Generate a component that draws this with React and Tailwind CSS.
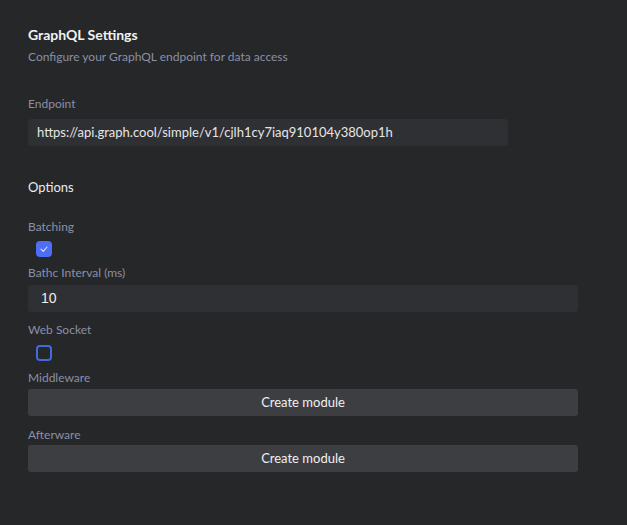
export default function App() {
  const label = "block text-[12px] leading-[18px] text-[#8a90a6]";
  return (
    <div className="w-[627px] h-[525px] bg-[#262729] font-['Lato','Noto_Sans',sans-serif] overflow-hidden">
      <div className="pl-[28px] pt-[25px] flex flex-col">
        <h1 className="text-[14px] leading-[20px] font-bold text-[#f2f2f2]">GraphQL Settings</h1>
        <p className="mt-[3px] text-[12px] leading-[18px] text-[#8a90a6]">Configure your GraphQL endpoint for data access</p>

        <span className={label + " mt-[29px]"}>Endpoint</span>
        <div className="mt-[6px] w-[480px] h-[27px] rounded-[3px] bg-[#2f3034] flex items-center pl-[9px] text-[13px] text-[#e6e6e6]">
          https://api.graph.cool/simple/v1/cjlh1cy7iaq910104y380op1h
        </div>

        <h2 className="mt-[31px] text-[13px] leading-[20px] text-[#ebebeb]">Options</h2>

        <span className={label + " mt-[21px]"}>Batching</span>
        <div className="mt-[5px] ml-[8px] w-[16px] h-[16px] rounded-[4px] bg-[#4d6ef5] flex items-center justify-center">
          <svg width="10" height="10" viewBox="0 0 10 10" fill="none">
            <path d="M2 5.2 L4.2 7.3 L8 3" stroke="#dfe6ff" strokeWidth="1.1" strokeLinecap="round" strokeLinejoin="round" />
          </svg>
        </div>

        <span className={label + " mt-[7px]"}>Bathc Interval (ms)</span>
        <div className="mt-[3px] w-[550px] h-[27px] rounded-[3px] bg-[#2f3034] flex items-center pl-[13px] text-[14px] text-[#ededed] font-['Liberation_Sans',sans-serif]">
          10
        </div>

        <span className={label + " mt-[9px]"}>Web Socket</span>
        <div className="mt-[6px] ml-[8px] w-[16px] h-[16px] rounded-[4px] border-2 border-[#3f6ae0]"></div>

        <span className={label + " mt-[8px]"}>Middleware</span>
        <button className="mt-[2px] w-[550px] h-[27px] rounded-[3px] bg-[#3d3e42] text-[13px] text-[#f0f0f0]">
          Create module
        </button>

        <span className={label + " mt-[10px]"}>Afterware</span>
        <button className="mt-[1px] w-[550px] h-[27px] rounded-[3px] bg-[#3d3e42] text-[13px] text-[#f0f0f0]">
          Create module
        </button>
      </div>
    </div>
  );
}
